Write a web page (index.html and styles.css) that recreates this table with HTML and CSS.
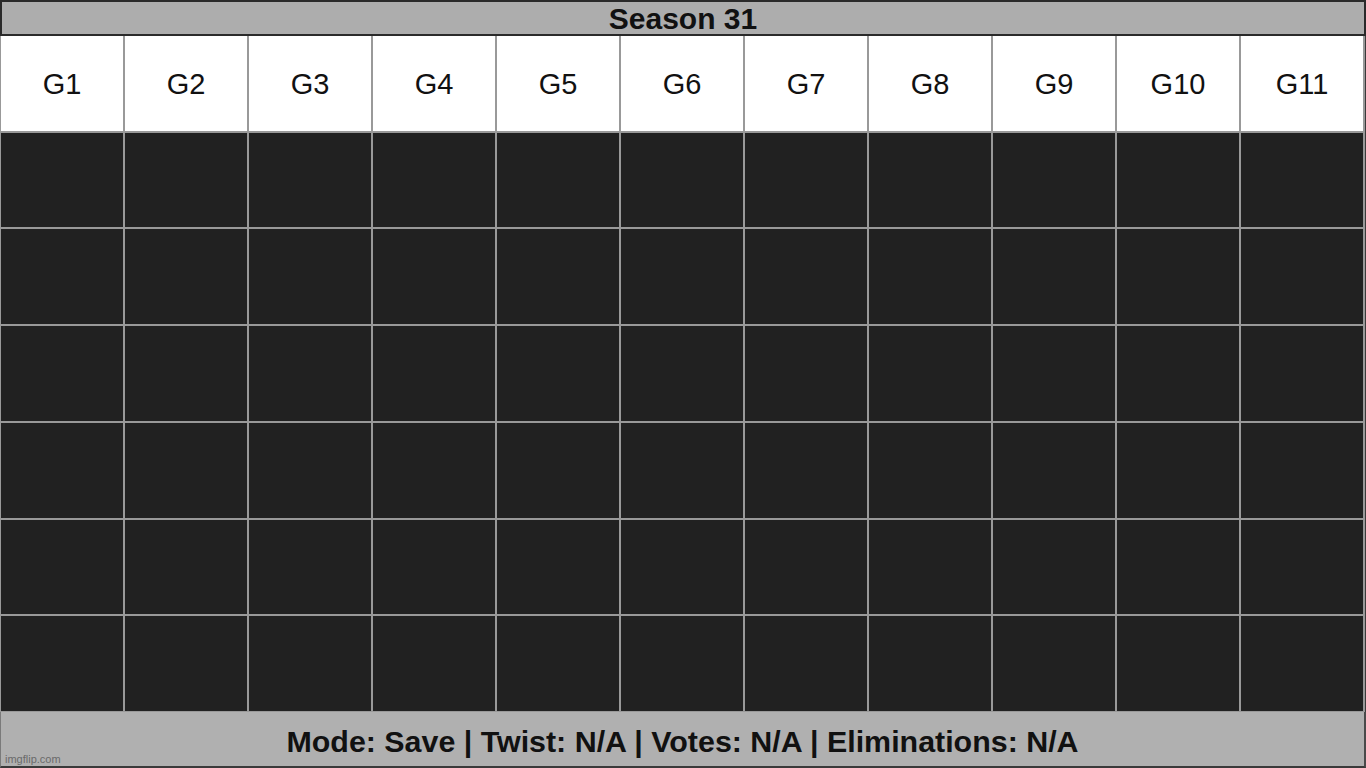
FILE: index.html
```html
<!DOCTYPE html>
<html lang="en">
<head>
<meta charset="utf-8">
<title>Season 31</title>
<link rel="stylesheet" href="styles.css">
</head>
<body>
<div class="page">
  <div class="title">Season 31</div>
  <div class="board">
    <div class="cell head">G1</div><div class="cell head">G2</div><div class="cell head">G3</div><div class="cell head">G4</div><div class="cell head">G5</div><div class="cell head">G6</div><div class="cell head">G7</div><div class="cell head">G8</div><div class="cell head">G9</div><div class="cell head">G10</div><div class="cell head">G11</div>
    <div class="cell"></div><div class="cell"></div><div class="cell"></div><div class="cell"></div><div class="cell"></div><div class="cell"></div><div class="cell"></div><div class="cell"></div><div class="cell"></div><div class="cell"></div><div class="cell"></div>
    <div class="cell"></div><div class="cell"></div><div class="cell"></div><div class="cell"></div><div class="cell"></div><div class="cell"></div><div class="cell"></div><div class="cell"></div><div class="cell"></div><div class="cell"></div><div class="cell"></div>
    <div class="cell"></div><div class="cell"></div><div class="cell"></div><div class="cell"></div><div class="cell"></div><div class="cell"></div><div class="cell"></div><div class="cell"></div><div class="cell"></div><div class="cell"></div><div class="cell"></div>
    <div class="cell"></div><div class="cell"></div><div class="cell"></div><div class="cell"></div><div class="cell"></div><div class="cell"></div><div class="cell"></div><div class="cell"></div><div class="cell"></div><div class="cell"></div><div class="cell"></div>
    <div class="cell"></div><div class="cell"></div><div class="cell"></div><div class="cell"></div><div class="cell"></div><div class="cell"></div><div class="cell"></div><div class="cell"></div><div class="cell"></div><div class="cell"></div><div class="cell"></div>
    <div class="cell"></div><div class="cell"></div><div class="cell"></div><div class="cell"></div><div class="cell"></div><div class="cell"></div><div class="cell"></div><div class="cell"></div><div class="cell"></div><div class="cell"></div><div class="cell"></div>
  </div>
  <div class="footer">
    <span class="footer-text">Mode: Save | Twist: N/A | Votes: N/A | Eliminations: N/A</span>
    <span class="watermark">imgflip.com</span>
  </div>
</div>
</body>
</html>
```
FILE: styles.css
```css
html, body {
  margin: 0;
  padding: 0;
  background: #ffffff;
}
body {
  font-family: "Liberation Sans", Arial, sans-serif;
}
.page {
  width: 1366px;
  height: 768px;
  display: flex;
  flex-direction: column;
  overflow: hidden;
}
.title {
  height: 32px;
  flex: 0 0 32px;
  border: 2px solid #2a2a2a;
  background: #adadad;
  color: #111111;
  font-weight: bold;
  font-size: 30px;
  line-height: 34px;
  text-align: center;
  overflow: hidden;
}
.board {
  flex: 1 1 auto;
  display: grid;
  grid-template-columns: repeat(11, 122px);
  grid-template-rows: repeat(7, 1fr);
  gap: 2px;
  padding: 0 1px 1px 1px;
  background: #999999;
  border-right: 1px solid #3a3a3a;
}
.cell {
  background: #212121;
}
.cell.head {
  background: #ffffff;
  color: #111111;
  font-size: 29px;
  display: flex;
  align-items: center;
  justify-content: center;
  padding-top: 3px;
}
.footer {
  position: relative;
  flex: 0 0 54px;
  height: 54px;
  background: #b0b0b0;
  border-left: 1px solid #7a7a7a;
  border-right: 2px solid #4a4a4a;
  border-bottom: 2px solid #3a3a3a;
  display: flex;
  align-items: center;
  justify-content: center;
}
.footer-text {
  font-weight: bold;
  font-size: 30.4px;
  color: #111111;
  padding-top: 4px;
}
.watermark {
  position: absolute;
  left: 4px;
  bottom: 1px;
  font-size: 11px;
  color: #6a6a6a;
}
```
